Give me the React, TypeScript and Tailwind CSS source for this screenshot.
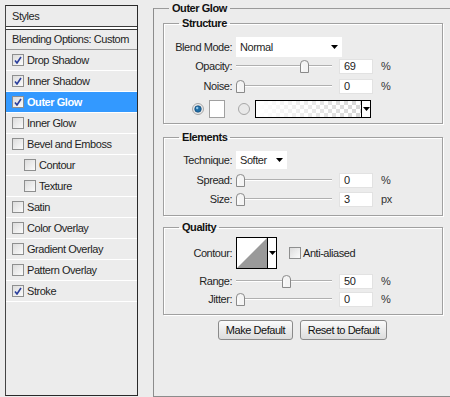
import React from 'react';

const font = { fontFamily: '"Liberation Sans", Arial, sans-serif' };

function Check({ on }: { on?: boolean }) {
    return (
        <span className="flex h-[12px] w-[12px] shrink-0 items-center justify-center border border-[#8e8f8f] bg-gradient-to-br from-[#dcdcdc] to-[#fbfbfb]">
            {on && (
                <svg width="8" height="8" viewBox="0 0 8 8">
                    <path d="M1 4.5 L3 7 L7 1" fill="none" stroke="#2a3e9c" strokeWidth="1.6" />
                </svg>
            )}
        </span>
    );
}

function Thumb() {
    return (
        <svg width="9" height="13" viewBox="0 0 9 13" className="shrink-0">
            <path d="M0.5 12.5 V4 Q0.5 0.5 4.5 0.5 Q8.5 0.5 8.5 4 V12.5 Z" fill="#f4f4f4" stroke="#8a8a8a" />
            <path d="M2 11 V5" stroke="#fff" />
        </svg>
    );
}

function Slider({ pos }: { pos: number }) {
    return (
        <div className="relative flex h-[13px] w-[96px] items-center">
            <div className="h-[2px] w-full border-t border-[#b0b0b0] border-b-white bg-white" />
            <div className="absolute top-0" style={{ left: pos }}>
                <Thumb />
            </div>
        </div>
    );
}

function NumInput({ value }: { value: string }) {
    return (
        <div className="flex h-[15px] w-[34px] items-center border border-[#e2e2e2] bg-white pl-[4px] text-[11px] leading-none text-[#222]">
            {value}
        </div>
    );
}

function SliderRow({ label, pos, value, unit, mt }: { label: string; pos: number; value: string; unit: string; mt: string }) {
    return (
        <div className={`flex h-[18px] items-center ${mt}`}>
            <div className="w-[69px] pr-[1px] text-right">{label}</div>
            <div className="ml-[3px]">
                <Slider pos={pos} />
            </div>
            <div className="ml-[7px]">
                <NumInput value={value} />
            </div>
            <div className="ml-[8px] text-[#333]">{unit}</div>
        </div>
    );
}

function Arrow() {
    return (
        <svg width="7" height="4" viewBox="0 0 7 4">
            <path d="M0 0 H7 L3.5 4 Z" fill="#000" />
        </svg>
    );
}

function Radio({ on }: { on?: boolean }) {
    return (
        <svg width="12" height="12" viewBox="0 0 12 12" className="shrink-0">
            <circle cx="6" cy="6" r="5.5" fill="#e9e9e9" stroke="#a6a6a6" />
            {on && <circle cx="6" cy="6" r="3.3" fill="#1f6ea6" stroke="#0d3e6a" strokeWidth="0.6" />}
            {on && <circle cx="5.2" cy="5" r="1.2" fill="#8fc6ea" />}
        </svg>
    );
}

function Group({ title, children, className }: { title: string; children: React.ReactNode; className?: string }) {
    return (
        <fieldset className={`ml-[9px] w-[280px] border border-[#a0a0a0] shadow-[inset_1px_1px_0_#fff,1px_1px_0_#fff] ${className ?? ''}`}>
            <legend className="ml-[15px] h-[16px] px-[3px] text-[11px] font-bold leading-[16px] text-[#111]">{title}</legend>
            {children}
        </fieldset>
    );
}

const styles: { name: string; on?: boolean; sub?: boolean; active?: boolean }[] = [
    { name: 'Drop Shadow', on: true },
    { name: 'Inner Shadow', on: true },
    { name: 'Outer Glow', on: true, active: true },
    { name: 'Inner Glow' },
    { name: 'Bevel and Emboss' },
    { name: 'Contour', sub: true },
    { name: 'Texture', sub: true },
    { name: 'Satin' },
    { name: 'Color Overlay' },
    { name: 'Gradient Overlay' },
    { name: 'Pattern Overlay' },
    { name: 'Stroke', on: true },
];

export default function App() {
    return (
        <div className="flex h-[397px] w-[450px] overflow-hidden bg-[#ececec] text-[11px] tracking-[-0.45px] whitespace-nowrap text-[#1f1f1f]" style={font}>
            {/* Styles list */}
            <div className="ml-[5px] mt-[5px] h-[391px] w-[133px] shrink-0 border border-[#2a2a2a] border-l-[#444]">
                <div className="flex h-[21px] items-center border-b border-[#3a3a3a] pl-[6px]">Styles</div>
                <div className="h-[2px] bg-white" />
                <div className="flex h-[21px] items-center border-t border-b border-t-[#3a3a3a] border-b-[#9a9a9a] pl-[6px]">
                    Blending Options: Custom
                </div>
                {styles.map((s) => (
                    <div
                        key={s.name}
                        className={`flex h-[21px] items-center gap-[3px] border-b border-white ${s.sub ? 'pl-[18px]' : 'pl-[6px]'} ${
                            s.active ? 'bg-[#3399ff] font-bold text-white' : ''
                        }`}
                    >
                        <Check on={s.on} />
                        <span>{s.name}</span>
                    </div>
                ))}
            </div>

            {/* Outer Glow panel */}
            <fieldset className="ml-[15px] h-[397px] w-[320px] shrink-0 border border-t-[#9a9a9a] border-l-[#8c8c8c] border-b-[#8c8c8c] border-r-[#8c8c8c]">
                <legend className="ml-[15px] h-[16px] px-[3px] text-[11px] font-bold leading-[16px] text-[#111]">Outer Glow</legend>

                <Group title="Structure" className="-mt-[1px] pb-[5px]">
                    <div className="mt-[6px] flex h-[20px] items-center">
                        <div className="w-[69px] pr-[1px] text-right">Blend Mode:</div>
                        <div className="ml-[3px] flex h-[20px] w-[106px] items-center justify-between bg-white pl-[4px] pr-[4px]">
                            <span>Normal</span>
                            <Arrow />
                        </div>
                    </div>
                    <SliderRow label="Opacity:" pos={64} value="69" unit="%" mt="mt-[0px]" />
                    <SliderRow label="Noise:" pos={0} value="0" unit="%" mt="mt-[2px]" />
                    <div className="mt-[5px] flex h-[18px] items-center">
                        <div className="ml-[28px]">
                            <Radio on />
                        </div>
                        <div className="ml-[5px] h-[18px] w-[16px] border border-[#a0a0a0] bg-white" />
                        <div className="ml-[13px]">
                            <Radio />
                        </div>
                        <div className="ml-[5px] flex h-[18px] w-[116px] border border-black">
                            <svg width="105" height="16" viewBox="0 0 105 16">
                                <defs>
                                    <pattern id="chk" width="8" height="8" patternUnits="userSpaceOnUse">
                                        <rect width="8" height="8" fill="#fff" />
                                        <rect width="4" height="4" fill="#d6d6d6" />
                                        <rect x="4" y="4" width="4" height="4" fill="#d6d6d6" />
                                    </pattern>
                                    <linearGradient id="fade" x1="0" x2="1" y1="0" y2="0">
                                        <stop offset="0" stopColor="#fff" stopOpacity="1" />
                                        <stop offset="1" stopColor="#fff" stopOpacity="0" />
                                    </linearGradient>
                                </defs>
                                <rect width="105" height="16" fill="url(#chk)" />
                                <rect width="105" height="16" fill="url(#fade)" />
                            </svg>
                            <div className="flex w-[9px] items-center justify-center border-l border-black bg-white">
                                <Arrow />
                            </div>
                        </div>
                    </div>
                </Group>

                <Group title="Elements" className="mt-[5px] pb-[7px]">
                    <div className="mt-[6px] flex h-[18px] items-center">
                        <div className="w-[69px] pr-[1px] text-right">Technique:</div>
                        <div className="ml-[3px] flex h-[18px] w-[51px] items-center justify-between bg-white pl-[4px] pr-[4px]">
                            <span>Softer</span>
                            <Arrow />
                        </div>
                    </div>
                    <SliderRow label="Spread:" pos={0} value="0" unit="%" mt="mt-[2px]" />
                    <SliderRow label="Size:" pos={0} value="3" unit="px" mt="mt-[1px]" />
                </Group>

                <Group title="Quality" className="mt-[3px] pb-[6px]">
                    <div className="mt-[2px] flex h-[32px] items-center">
                        <div className="w-[69px] pr-[1px] text-right">Contour:</div>
                        <div className="ml-[3px] flex h-[32px] w-[41px] border border-black bg-white">
                            <svg width="30" height="30" viewBox="0 0 30 30">
                                <path d="M0 30 L30 0 V30 Z" fill="#9a9a9a" />
                            </svg>
                            <div className="flex w-[9px] items-center justify-center border-l border-black">
                                <Arrow />
                            </div>
                        </div>
                        <div className="ml-[12px]">
                            <Check />
                        </div>
                        <span className="ml-[2px]">Anti-aliased</span>
                    </div>
                    <SliderRow label="Range:" pos={46} value="50" unit="%" mt="mt-[3px]" />
                    <SliderRow label="Jitter:" pos={0} value="0" unit="%" mt="mt-[0px]" />
                </Group>

                <div className="mt-[5px] flex gap-[7px] pl-[64px]">
                    <button className="h-[20px] w-[75px] rounded-[3px] border border-[#8a8a8a] bg-gradient-to-b from-[#fbfbfb] to-[#dcdcdc] text-[11px] text-[#111]">
                        Make Default
                    </button>
                    <button className="h-[20px] w-[87px] rounded-[3px] border border-[#8a8a8a] bg-gradient-to-b from-[#fbfbfb] to-[#dcdcdc] text-[11px] text-[#111]">
                        Reset to Default
                    </button>
                </div>
            </fieldset>
        </div>
    );
}
